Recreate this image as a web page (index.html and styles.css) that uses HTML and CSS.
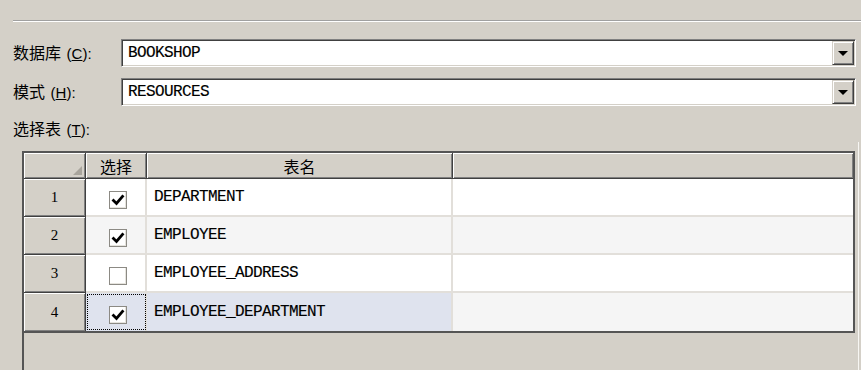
FILE: index.html
```html
<!DOCTYPE html>
<html lang="zh">
<head>
  <meta charset="utf-8">
  <title>选择表</title>
  <link rel="stylesheet" href="styles.css">
</head>
<body>
  <div class="dialog">
    <div class="sep"></div>

    <!-- 数据库 / 模式 下拉框 -->
    <div class="field first">
      <label>数据库 <span class="key">(<u>C</u>):</span></label>
      <div class="combo">
        <span class="combo-text">BOOKSHOP</span>
        <span class="combo-btn"><i class="arrow"></i></span>
      </div>
    </div>
    <div class="field">
      <label>模式 <span class="key">(<u>H</u>):</span></label>
      <div class="combo">
        <span class="combo-text">RESOURCES</span>
        <span class="combo-btn"><i class="arrow"></i></span>
      </div>
    </div>
    <div class="caption">选择表 <span class="key">(<u>T</u>):</span></div>

    <!-- 表格 -->
    <div class="grid-area">
      <div class="grid">
        <table>
          <tr class="head">
            <th class="corner"><i class="tri"></i></th>
            <th class="col-sel">选择</th>
            <th class="col-name">表名</th>
            <th class="col-rest"></th>
          </tr>
          <tr>
            <th class="rowhead">1</th>
            <td class="sel"><span class="check"><svg viewBox="0 0 16 16" width="16" height="16"><path d="M3.5 8.5 L6.5 11.5 L12.5 4.5" /></svg></span></td>
            <td class="name">DEPARTMENT</td>
            <td></td>
          </tr>
          <tr class="alt">
            <th class="rowhead">2</th>
            <td class="sel"><span class="check"><svg viewBox="0 0 16 16" width="16" height="16"><path d="M3.5 8.5 L6.5 11.5 L12.5 4.5" /></svg></span></td>
            <td class="name">EMPLOYEE</td>
            <td></td>
          </tr>
          <tr>
            <th class="rowhead">3</th>
            <td class="sel"><span class="check"></span></td>
            <td class="name">EMPLOYEE_ADDRESS</td>
            <td></td>
          </tr>
          <tr class="alt">
            <th class="rowhead">4</th>
            <td class="sel picked focus"><span class="check"><svg viewBox="0 0 16 16" width="16" height="16"><path d="M3.5 8.5 L6.5 11.5 L12.5 4.5" /></svg></span></td>
            <td class="name picked">EMPLOYEE_DEPARTMENT</td>
            <td></td>
          </tr>
        </table>
      </div>
    </div>
  </div>
</body>
</html>
```

FILE: styles.css
```css
body {
  margin: 0;
  background: #d4d0c8;
  font-family: "Noto Sans CJK SC", "Noto Sans", sans-serif;
  font-size: 16px;
  color: #000;
  overflow: hidden;
}
.dialog {
  height: 370px;
  overflow: hidden;
}
.sep {
  margin: 20px 0 0 13px;
  border-top: 1px solid #a0a0a0;
  border-bottom: 1px solid #fff;
}
.key {
  font-family: "Liberation Sans", sans-serif;
  font-size: 15px;
  margin-left: 2px;
}
.field {
  display: flex;
  align-items: center;
  height: 28px;
  margin: 11px 0 0 13px;
}
.field.first {
  margin-top: 17px;
}
.field label {
  width: 108px;
  line-height: 20px;
}
.combo {
  box-sizing: border-box;
  width: 735px;
  height: 28px;
  display: flex;
  align-items: center;
  background: #fff;
  border-top: 1px solid #808080;
  border-left: 1px solid #808080;
  border-right: 1px solid #fff;
  border-bottom: 1px solid #fff;
  box-shadow: inset 1px 1px #404040, inset -1px -1px #d4d0c8;
  padding: 1px 1px 1px 2px;
}
.combo-text {
  flex: 1;
  padding-left: 4px;
  font-family: "Liberation Mono", monospace;
  font-size: 16px;
  letter-spacing: -0.6px;
  -webkit-text-stroke: 0.15px #000;
}
.combo-btn {
  box-sizing: border-box;
  width: 22px;
  height: 24px;
  display: flex;
  align-items: center;
  justify-content: center;
  background: #d4d0c8;
  border-top: 1px solid #d4d0c8;
  border-left: 1px solid #d4d0c8;
  border-right: 1px solid #404040;
  border-bottom: 1px solid #404040;
  box-shadow: inset 1px 1px #fff, inset -1px -1px #808080;
}
.arrow {
  width: 0;
  height: 0;
  border-left: 5px solid transparent;
  border-right: 5px solid transparent;
  border-top: 5px solid #000;
  margin-top: 1px;
}
.caption {
  margin: 12px 0 0 13px;
  line-height: 20px;
}
.grid-area {
  margin: 2px 0 0 22px;
  padding: 9px 3px 0 0;
  width: 833px;
  height: 221px;
  border-right: 1px solid #f7f6f3;
}
.grid {
  height: 221px;
  border-left: 2px solid #555;
  border-top: 2px solid #555;
}
table {
  border-collapse: separate;
  border-spacing: 0;
  table-layout: fixed;
  width: 831px;
  border-right: 2px solid #555;
  border-bottom: 2px solid #555;
}
th {
  font-weight: normal;
  background: #d4d0c8;
  padding: 0;
  border-right: 1px solid #404040;
  border-bottom: 1px solid #404040;
  box-shadow: inset 1px 1px #fff, inset -1px -1px #808080;
}
.head th {
  height: 26px;
  box-sizing: border-box;
  line-height: 20px;
}
.corner {
  width: 62px;
  position: relative;
}
.tri {
  position: absolute;
  right: 3px;
  bottom: 3px;
  width: 0;
  height: 0;
  border-left: 9px solid transparent;
  border-bottom: 9px solid #a8a49c;
}
.col-sel { width: 61px; }
.col-name { width: 306px; }
.col-rest { border-right: none; }
.rowhead {
  height: 38px;
  box-sizing: border-box;
  font-family: "Liberation Serif", serif;
  font-size: 15px;
}
td {
  height: 38px;
  box-sizing: border-box;
  padding: 0;
  background: #fff;
  border-right: 2px solid #e2dfda;
  border-bottom: 2px solid #e2dfda;
}
td:last-child {
  border-right: none;
}
tr:last-child td, tr:last-child th {
  border-bottom: none;
}
.alt td {
  background: #f5f5f5;
}
.alt td.picked {
  background: #dfe3ee;
}
.sel {
  text-align: center;
  padding-left: 5px;
}
.focus {
  outline: 1px dotted #000;
  outline-offset: -2px;
}
.name {
  padding-left: 7px;
  font-family: "Liberation Mono", monospace;
  font-size: 16px;
  letter-spacing: -0.6px;
  -webkit-text-stroke: 0.15px #000;
  white-space: nowrap;
}
.check {
  display: inline-flex;
  align-items: center;
  justify-content: center;
  vertical-align: middle;
  box-sizing: border-box;
  width: 18px;
  height: 18px;
  border: 1px solid #8c8a84;
  background: #fff;
  box-shadow: inset -1px -1px #e6e4de;
}
.check svg path {
  fill: none;
  stroke: #000;
  stroke-width: 2.8;
  stroke-linecap: square;
  stroke-linejoin: miter;
}
```
